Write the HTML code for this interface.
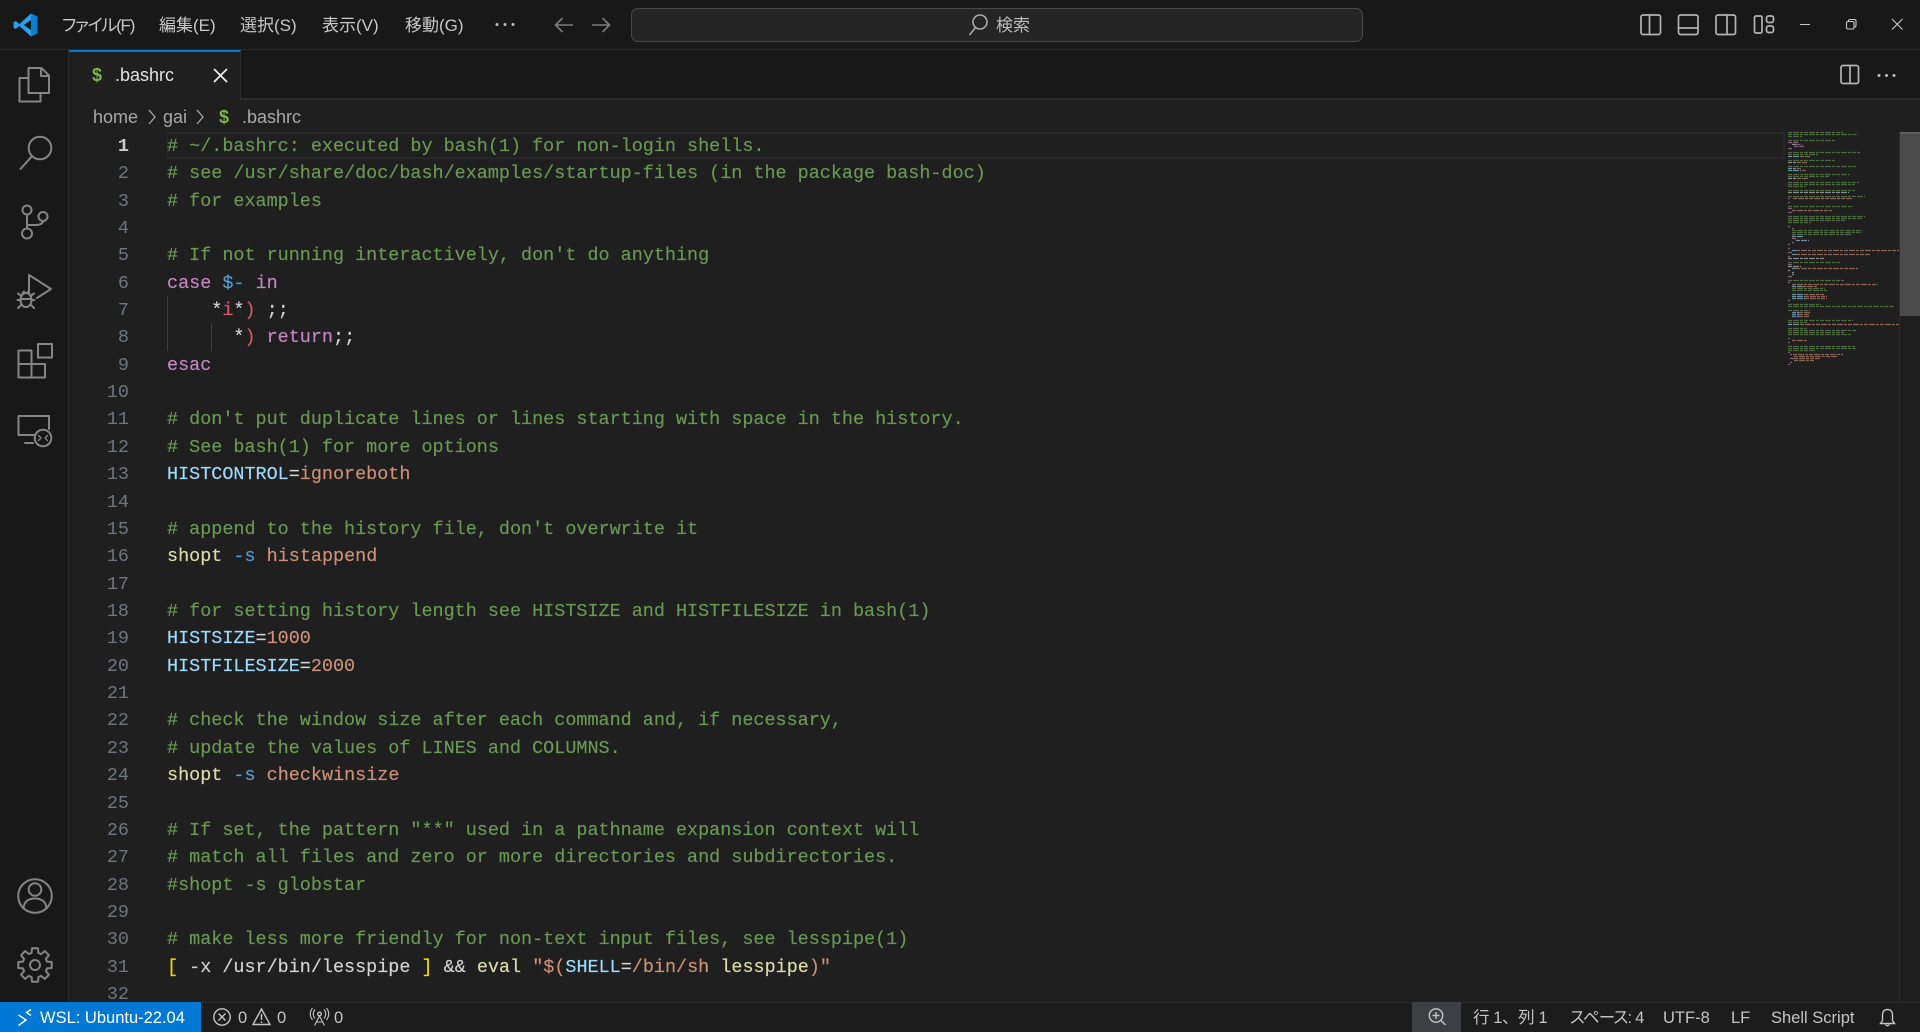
<!DOCTYPE html>
<html lang="ja"><head><meta charset="utf-8"><title>.bashrc</title>
<style>
*{box-sizing:border-box}
html,body{margin:0;padding:0;width:1920px;height:1032px;overflow:hidden;background:#1f1f1f}
body{position:relative;font-family:"Liberation Sans","Noto Sans CJK JP",sans-serif;color:#ccc}
.b{position:absolute}
.t{position:absolute;white-space:nowrap;line-height:1}
.m{font-size:17px;top:17px;color:#c8c8c8}
.p{font-feature-settings:"palt"}
.s{font-size:16.5px;top:1010px;color:#c4c4c4}
#nums,#code{position:absolute;top:132.9px;font-family:"Liberation Mono",monospace;font-size:18.46px;height:869px;overflow:hidden}
#nums{left:68px;width:61px;text-align:right;color:#6e7681}
#nums div,#code div{height:27.36px;line-height:27.36px;white-space:pre}
#code{left:167px;width:1600px;color:#d4d4d4;-webkit-text-stroke:.15px}
.c{color:#6a9955}.k{color:#c586c0}.v{color:#9cdcfe}.o{color:#ce9178}.f{color:#dcdcaa}.d{color:#569cd6}.r{color:#d65c5c}.y{color:#ffd700}
svg{position:absolute;left:0;top:0}
</style></head><body>
<div class="b" style="left:0;top:0;width:1920px;height:49px;background:#181818"></div>
<div class="b" style="left:0;top:49px;width:1920px;height:1px;background:#2b2b2b"></div>
<div class="b" style="left:0;top:50px;width:68px;height:952px;background:#181818"></div>
<div class="b" style="left:68px;top:50px;width:1px;height:952px;background:#2b2b2b"></div>
<div class="b" style="left:69px;top:50px;width:1851px;height:49px;background:#181818"></div>
<div class="b" style="left:69px;top:98px;width:1851px;height:2px;background:#2b2b2b"></div>
<div class="b" style="left:69px;top:50px;width:172px;height:50px;background:#1f1f1f;border-top:2px solid #0078d4;border-right:1px solid #2b2b2b"></div>
<div class="b" style="left:631px;top:8px;width:732px;height:34px;background:#252525;border:1px solid #4a4a4a;border-radius:7px"></div>

<div class="t m p" style="left:62px;letter-spacing:-1.2px">ファイル(F)</div>
<div class="t m" style="left:159px">編集(E)</div>
<div class="t m" style="left:240px">選択(S)</div>
<div class="t m" style="left:322px">表示(V)</div>
<div class="t m" style="left:405px">移動(G)</div>
<div class="t" style="left:996px;top:17px;font-size:17px;color:#bdbdbd">検索</div>

<div class="t" style="left:92px;top:66px;font-size:18px;font-weight:bold;color:#7ab648">$</div>
<div class="t" style="left:115px;top:66px;font-size:18px;color:#e2e2e2">.bashrc</div>
<div class="t" style="left:93px;top:108px;font-size:18px;color:#a8a8a8">home</div>
<div class="t" style="left:163px;top:108px;font-size:18px;color:#a8a8a8">gai</div>
<div class="t" style="left:219px;top:108px;font-size:18px;font-weight:bold;color:#7ab648">$</div>
<div class="t" style="left:242px;top:108px;font-size:18px;color:#a8a8a8">.bashrc</div>

<div class="b" style="left:167px;top:132px;width:1618px;height:27px;border:2px solid #282828;border-left-width:1px"></div>
<div class="b" style="left:167px;top:296px;width:1px;height:55px;background:#404040"></div>
<div class="b" style="left:211px;top:323px;width:1px;height:28px;background:#404040"></div>

<div id="nums"><div style="color:#ccc;font-weight:bold">1</div><div>2</div><div>3</div><div>4</div><div>5</div><div>6</div><div>7</div><div>8</div><div>9</div><div>10</div><div>11</div><div>12</div><div>13</div><div>14</div><div>15</div><div>16</div><div>17</div><div>18</div><div>19</div><div>20</div><div>21</div><div>22</div><div>23</div><div>24</div><div>25</div><div>26</div><div>27</div><div>28</div><div>29</div><div>30</div><div>31</div><div>32</div></div>

<div id="code">
<div class="c"># ~/.bashrc: executed by bash(1) for non-login shells.</div>
<div class="c"># see /usr/share/doc/bash/examples/startup-files (in the package bash-doc)</div>
<div class="c"># for examples</div>
<div> </div>
<div class="c"># If not running interactively, don't do anything</div>
<div><span class="k">case</span> <span class="d">$-</span> <span class="k">in</span></div>
<div>    *<span class="r">i</span>*<span class="r">)</span> ;;</div>
<div>      *<span class="r">)</span> <span class="k">return</span>;;</div>
<div><span class="k">esac</span></div>
<div> </div>
<div class="c"># don't put duplicate lines or lines starting with space in the history.</div>
<div class="c"># See bash(1) for more options</div>
<div><span class="v">HISTCONTROL</span>=<span class="o">ignoreboth</span></div>
<div> </div>
<div class="c"># append to the history file, don't overwrite it</div>
<div><span class="f">shopt</span> <span class="d">-s</span> <span class="o">histappend</span></div>
<div> </div>
<div class="c"># for setting history length see HISTSIZE and HISTFILESIZE in bash(1)</div>
<div><span class="v">HISTSIZE</span>=<span class="o">1000</span></div>
<div><span class="v">HISTFILESIZE</span>=<span class="o">2000</span></div>
<div> </div>
<div class="c"># check the window size after each command and, if necessary,</div>
<div class="c"># update the values of LINES and COLUMNS.</div>
<div><span class="f">shopt</span> <span class="d">-s</span> <span class="o">checkwinsize</span></div>
<div> </div>
<div class="c"># If set, the pattern "**" used in a pathname expansion context will</div>
<div class="c"># match all files and zero or more directories and subdirectories.</div>
<div class="c">#shopt -s globstar</div>
<div> </div>
<div class="c"># make less more friendly for non-text input files, see lesspipe(1)</div>
<div><span class="y">[</span> -x /usr/bin/lesspipe <span class="y">]</span> &amp;&amp; <span class="f">eval</span> <span class="o">"$(</span><span class="v">SHELL</span>=<span class="o">/bin/sh</span> <span class="f">lesspipe</span><span class="o">)"</span></div>
<div> </div>
</div>

<!-- minimap -->
<svg width="1920" height="1032" viewBox="0 0 1920 1032" fill="none">
<g stroke-width="1.3" stroke-dasharray="4 1 6 1 3 1" opacity=".6">
<path stroke="#6a9955" d="M1788 132.5h55M1788 134.5h70M1788 136.5h14M1788 140.5h47M1788 152.5h72M1788 154.5h30M1788 160.5h47M1788 166.5h69M1788 174.5h62M1788 176.5h41M1788 182.5h71M1788 184.5h67M1788 186.5h18M1788 190.5h67M1788 196.5h77M1788 206.5h65M1788 216.5h77M1788 218.5h74M1788 220.5h57M1788 222.5h23M1792 230.5h70M1792 232.5h70M1792 234.5h60M1788 262.5h53M1788 280.5h56M1792 288.5h33M1792 290.5h35M1788 304.5h33M1788 306.5h106M1788 310.5h22M1788 320.5h65M1788 322.5h19M1788 328.5h19M1788 330.5h68M1788 332.5h56M1788 334.5h63M1788 346.5h67M1788 348.5h68M1788 350.5h28"/>
<path stroke="#c586c0" d="M1788 142.5h10M1788 148.5h4M1788 198.5h2M1788 202.5h2M1788 208.5h4M1788 212.5h4M1788 226.5h2M1792 228.5h2M1792 238.5h4M1792 242.5h2M1788 244.5h2M1788 248.5h2M1788 252.5h4M1788 256.5h2M1788 264.5h4M1788 276.5h4M1788 282.5h2M1788 300.5h2M1788 338.5h2M1788 342.5h2M1788 352.5h2M1790 354.5h2M1790 358.5h4M1790 362.5h2M1788 364.5h2M1796 144.5h6M1794 146.5h10"/>
<path stroke="#9cdcfe" d="M1788 156.5h11M1788 168.5h8M1788 170.5h13M1792 236.5h12M1796 240.5h13M1792 250.5h4M1792 254.5h4M1792 268.5h4M1792 286.5h10M1792 294.5h12M1792 296.5h13M1792 298.5h13M1792 312.5h7M1792 314.5h7M1792 316.5h7M1788 324.5h12"/>
<path stroke="#ce9178" d="M1800 156.5h10M1797 162.5h10M1797 168.5h4M1802 170.5h4M1797 178.5h12M1793 198.5h60M1792 210.5h40M1796 250.5h103M1796 254.5h74M1796 268.5h62M1792 284.5h86M1802 286.5h16M1804 294.5h20M1805 296.5h22M1805 298.5h22M1799 312.5h12M1799 314.5h10M1799 316.5h10M1800 324.5h99M1792 340.5h16M1793 354.5h50M1794 356.5h44M1794 358.5h26M1794 360.5h20"/>
<path stroke="#d4d4d4" d="M1792 144.5h4M1792 272.5h2M1792 274.5h2M1788 270.5h2M1788 258.5h37M1788 178.5h8M1788 162.5h8M1788 192.5h61M1788 266.5h13"/>
</g>

<!-- logo -->
<path d="M31 13.5 37.5 16.5V33.5L31 36.5Z" fill="#0d7fcf"/>
<path d="M31 13.5 19.5 24 15.6 21 13.5 22.3V27.7L15.6 29 19.5 26 31 36.5V30L23.8 25 31 20Z" fill="#27a0ef"/>

<g stroke="#858585" stroke-width="2" stroke-linejoin="round" stroke-linecap="round">
<!-- files -->
<path d="M28.5 93V68H41.5L49 75.5V93ZM41 68.5V76H48.5M28 78H19.5V101.5H40.5V93"/>
<!-- search -->
<circle cx="40" cy="148" r="11.3"/><path d="M32 156.2 20 169.5" stroke-linecap="butt"/>
<!-- source control -->
<circle cx="27" cy="210" r="4.5"/><circle cx="27" cy="233.5" r="5"/><circle cx="43" cy="216.5" r="4.5"/>
<path d="M27 214.5V228.5M27 225H36C40 225 43 223.5 43 221"/>
<!-- run -->
<path d="M29 291V275L51 289 37 298"/>
<ellipse cx="26" cy="300" rx="5.5" ry="7"/>
<path d="M20.5 299H31.5M18 293.5 21.5 296M34 293.5 30.5 296M17.5 300H20.5M31.5 300H34.5M18 308 21.5 304.5M34 308 30.5 304.5M22.5 293.5 24 291.5M29.5 293.5 28 291.5"/>
<!-- extensions -->
<path d="M18.5 350.5H31.5V377.5H18.5ZM18.5 364H45V377.5H31.5M38 344H52V357.5H38Z"/>
<!-- remote -->
<path d="M34 435H18.5V416H49V429M25 443H33"/>
<circle cx="43" cy="438" r="8.3"/>
<path d="M38.5 435.5 41 438 38.5 440.5M47.5 435.5 45 438 47.5 440.5" stroke-width="1.4"/>
<!-- account -->
<circle cx="35" cy="896" r="16.8"/><circle cx="35" cy="889.5" r="6.3"/>
<path d="M23.5 908.5C24 902 28 898.5 35 898.5S46 902 46.5 908.5"/>
<!-- gear -->
<g transform="translate(35 965)"><path d="M12-3.4 16.7-3V3L12 3.4 10.9 6.1 13.9 9.8 9.8 13.9 6.1 10.9 3.4 12 3 16.7H-3L-3.4 12-6.1 10.9-9.8 13.9-13.9 9.8-10.9 6.1-12 3.4-16.7 3V-3L-12-3.4-10.9-6.1-13.9-9.8-9.8-13.9-6.1-10.9-3.4-12-3-16.7H3L3.4-12 6.1-10.9 9.8-13.9 13.9-9.8 10.9-6.1Z"/><circle r="5"/></g>
</g>

<!-- title icons -->
<g stroke="#b4b4b4" stroke-width="1.7" stroke-linejoin="round">
<rect x="1641" y="15" width="19.5" height="19.5" rx="2"/><path d="M1649.5 15V34.5"/>
<rect x="1678.5" y="15" width="19.5" height="19.5" rx="2"/><path d="M1678.5 28H1698"/>
<rect x="1716" y="15" width="19.5" height="19.5" rx="2"/><path d="M1727 15V34.5"/>
<rect x="1754.5" y="16" width="7.5" height="17" rx="1.5"/><rect x="1766.5" y="16" width="7" height="6.5" rx="2"/><rect x="1766.5" y="26" width="7" height="6.5" rx="2"/>
<rect x="1841" y="65.5" width="17.5" height="18" rx="2"/><path d="M1850 65.5V83.5"/>
</g>
<g stroke="#c8c8c8" stroke-width="1.1">
<path d="M1800 24.5H1810M1892 19 1902.5 29.5M1902.5 19 1892 29.5"/>
<rect x="1846.5" y="21.5" width="7.5" height="7.5" rx="1.5"/><path d="M1848.5 21V20.5Q1848.5 19.5 1850 19.5H1854.5Q1856 19.5 1856 21V25.5Q1856 27 1854.5 27"/>
</g>
<g fill="#c0c0c0"><circle cx="497" cy="24.5" r="1.5"/><circle cx="505" cy="24.5" r="1.5"/><circle cx="513" cy="24.5" r="1.5"/><circle cx="1879" cy="75.5" r="1.5"/><circle cx="1886.5" cy="75.5" r="1.5"/><circle cx="1894" cy="75.5" r="1.5"/></g>
<g stroke="#7c7c7c" stroke-width="1.6"><path d="M573 25H555.5M562.5 18 555.5 25 562.5 32M592 25H609.5M602.5 18 609.5 25 602.5 32"/></g>
<g stroke="#aaa" stroke-width="1.6"><circle cx="980" cy="22" r="7"/><path d="M975.5 27.5 969.5 35"/></g>
<!-- tab x, breadcrumb chevrons -->
<path d="M214 69 227 82M227 69 214 82" stroke="#f0f0f0" stroke-width="1.7"/>
<path d="M149 110 155 117 149 124M197 110 203 117 197 124" stroke="#a8a8a8" stroke-width="1.3"/>
</svg>

<!-- scrollbar -->
<div class="b" style="left:1899px;top:132px;width:1px;height:870px;background:#2b2b2b"></div>
<div class="b" style="left:1900px;top:132px;width:20px;height:184px;background:#4b4b4b;border-top:2px solid #5f5f5f"></div>

<!-- status bar -->
<div class="b" style="left:0;top:1002px;width:1920px;height:30px;background:#1c1c1c;border-top:1px solid #2b2b2b"></div>
<div class="b" style="left:0;top:1002px;width:201px;height:30px;background:#0078d4"></div>
<div class="b" style="left:1412px;top:1002px;width:49px;height:30px;background:#3c3f43"></div>
<div class="t s" style="left:40px;color:#fff">WSL: Ubuntu-22.04</div>
<div class="t s" style="left:238px">0</div>
<div class="t s" style="left:277px">0</div>
<div class="t s" style="left:334px">0</div>
<div class="t s" style="left:1473px;letter-spacing:-.4px">行 1、列 1</div>
<div class="t s p" style="left:1570px;letter-spacing:-.8px">スペース: 4</div>
<div class="t s" style="left:1663px">UTF-8</div>
<div class="t s" style="left:1731px">LF</div>
<div class="t s" style="left:1771px">Shell Script</div>
<svg width="1920" height="1032" viewBox="0 0 1920 1032" fill="none" style="pointer-events:none">
<path d="M18.5 1015 26 1020 18.5 1025.5M31 1009.5 26.5 1012.5 31 1015.5" stroke="#fff" stroke-width="1.4"/>
<g stroke="#c4c4c4" stroke-width="1.4">
<circle cx="222" cy="1017" r="8.2"/><path d="M218.5 1013.5 225.5 1020.5M225.5 1013.5 218.5 1020.5"/>
<path d="M261.5 1009 270 1024.5H253ZM261.5 1014V1020M261.5 1021.5V1023"/>
<circle cx="319.5" cy="1014" r="1.8"/><path d="M319.5 1016 314.5 1025.5M319.5 1016 324.5 1025.5M316.5 1022H322.5M315 1009.5Q311.5 1014 315 1018.5M324 1009.5Q327.5 1014 324 1018.5M312.5 1008Q308 1014 312.5 1020M326.5 1008Q331 1014 326.5 1020" stroke-width="1.1"/>
<circle cx="1436" cy="1015.5" r="6.7"/><path d="M1441 1020.5 1445.5 1025M1436 1012V1019M1432.5 1015.5H1439.5"/>
<path d="M1887.5 1009.5C1884 1009.5 1882.5 1012 1882.5 1015V1020.5L1880.5 1023.5H1894.5L1892.5 1020.5V1015C1892.5 1012 1891 1009.5 1887.5 1009.5ZM1885.5 1024.5Q1887.5 1027 1889.5 1024.5"/>
</g>
</svg>
</body></html>
